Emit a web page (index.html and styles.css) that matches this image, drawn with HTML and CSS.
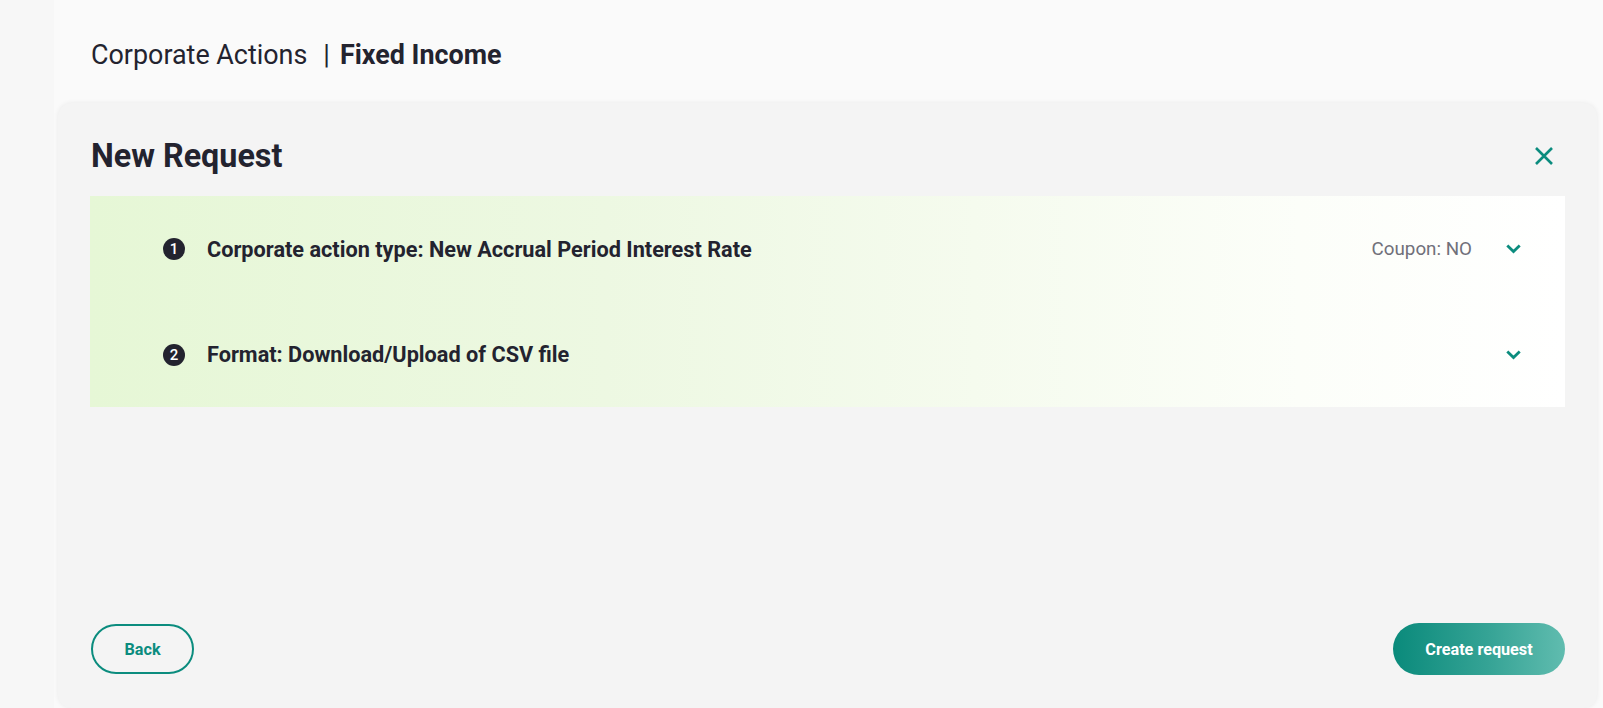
FILE: index.html
```html
<!DOCTYPE html>
<html lang="en">
<head>
    <meta charset="UTF-8">
    <meta name="viewport" content="width=device-width, initial-scale=1.0">
    <title>New Request - Corporate Actions</title>
    <link rel="stylesheet" href="styles.css">
</head>
<body>

<div class="sidebar"></div>

<div class="main">
    <div class="breadcrumb">
        <span class="crumb">Corporate Actions</span>
        <span class="sep">|</span>
        <span class="crumb-current">Fixed Income</span>
    </div>

    <div class="card">
        <div class="card-header">
            <h1 class="card-title">New Request</h1>
            <button class="close-btn" aria-label="Close">
                <svg width="20" height="20" viewBox="0 0 20 20">
                    <path d="M2 2 L18 18 M18 2 L2 18" stroke="#0b8c7e" stroke-width="2.6" fill="none"/>
                </svg>
            </button>
        </div>

        <div class="steps">
            <div class="step">
                <span class="step-num">1</span>
                <span class="step-label">Corporate action type: New Accrual Period Interest Rate</span>
                <span class="step-value">Coupon: NO</span>
                <svg class="chevron" width="15" height="10" viewBox="0 0 15 10">
                    <path d="M1.3 1.5 L7.5 7.6 L13.7 1.5" stroke="#0b8c7e" stroke-width="2.8" fill="none"/>
                </svg>
            </div>
            <div class="step">
                <span class="step-num">2</span>
                <span class="step-label">Format: Download/Upload of CSV file</span>
                <svg class="chevron" width="15" height="10" viewBox="0 0 15 10">
                    <path d="M1.3 1.5 L7.5 7.6 L13.7 1.5" stroke="#0b8c7e" stroke-width="2.8" fill="none"/>
                </svg>
            </div>
        </div>

        <div class="card-footer">
            <button class="btn btn-outline">Back</button>
            <button class="btn btn-primary">Create request</button>
        </div>
    </div>
</div>

</body>
</html>
```

FILE: styles.css
```css
html, body {
    margin: 0;
    height: 100%;
}
body {
    display: flex;
    font-family: Roboto, "Liberation Sans", Arial, sans-serif;
    color: #23232f;
    background: #fafafa;
    overflow: hidden;
}
.sidebar {
    width: 54px;
    flex-shrink: 0;
    background: #f7f7f7;
}
.main {
    flex: 1;
    display: flex;
    flex-direction: column;
    padding: 0 6px 0 4px;
}
.breadcrumb {
    display: flex;
    align-items: center;
    height: 30px;
    padding: 40px 0 0 33px;
    margin-bottom: 33px;
    font-size: 26.9px;
    line-height: 30px;
    flex-shrink: 0;
}
.crumb {
    font-weight: 400;
    color: #23232f;
}
.sep {
    margin: 0 10px 0 16px;
    font-size: 27px;
}
.crumb-current {
    font-weight: 700;
}
.card {
    height: 605px;
    flex-shrink: 0;
    box-sizing: border-box;
    background: #f4f4f4;
    border-radius: 14px;
    box-shadow: 0 0 5px rgba(0, 0, 0, 0.07);
    padding: 36px 32px 33px 32px;
    display: flex;
    flex-direction: column;
}
.card-header {
    display: flex;
    align-items: center;
    justify-content: space-between;
    height: 34px;
    margin-bottom: 23px;
}
.card-title {
    margin: 0;
    font-size: 32.3px;
    line-height: 34px;
    font-weight: 700;
    padding-left: 1px;
}
.close-btn {
    border: none;
    background: none;
    padding: 0;
    margin-right: 11px;
    display: flex;
    cursor: pointer;
}
.steps {
    background: linear-gradient(90deg, #e6f7d6 0%, #edf8e2 35%, #f5fbee 60%, #fcfef9 82%, #ffffff 100%);
}
.step {
    display: flex;
    align-items: center;
    height: 105px;
    padding: 0 44px 0 73px;
}
.step:first-child {
    height: 106px;
}
.step-num {
    width: 22px;
    height: 22px;
    border-radius: 50%;
    background: #23232f;
    color: #fff;
    font-size: 15px;
    font-weight: 500;
    display: flex;
    align-items: center;
    justify-content: center;
    margin-right: 22px;
    flex-shrink: 0;
}
.step-label {
    flex: 1;
    font-size: 21.7px;
    font-weight: 700;
    color: #23232f;
}
.step-value {
    font-size: 18.8px;
    color: #70707a;
    margin-right: 34px;
}
.chevron {
    flex-shrink: 0;
}
.card-footer {
    margin-top: auto;
    display: flex;
    justify-content: space-between;
    align-items: center;
}
.btn {
    font-family: Roboto, "Liberation Sans", Arial, sans-serif;
    font-size: 16.2px;
    font-weight: 700;
    border-radius: 26px;
    cursor: pointer;
}
.btn-outline {
    width: 103px;
    height: 50px;
    margin-left: 1px;
    background: transparent;
    border: 2px solid #0b8c7e;
    color: #0b8c7e;
}
.btn-primary {
    width: 172px;
    height: 52px;
    border: none;
    color: #fff;
    background: linear-gradient(90deg, #0a8a7b 0%, #35a395 55%, #60bcaf 100%);
}
```
